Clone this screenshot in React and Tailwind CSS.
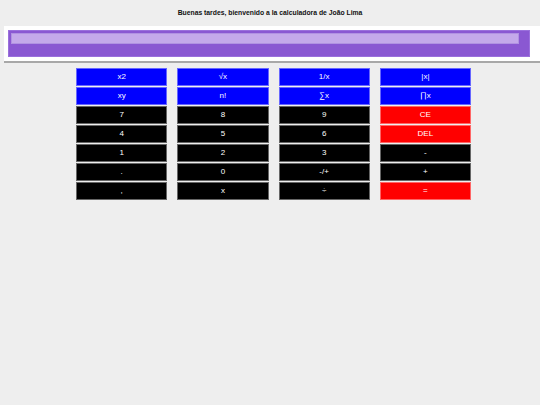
import React from "react";

const rows = [
  [
    { label: "x2", tone: "blue" },
    { label: "√x", tone: "blue" },
    { label: "1/x", tone: "blue" },
    { label: "|x|", tone: "blue" },
  ],
  [
    { label: "xy", tone: "blue" },
    { label: "n!", tone: "blue" },
    { label: "∑x", tone: "blue" },
    { label: "∏x", tone: "blue" },
  ],
  [
    { label: "7" },
    { label: "8" },
    { label: "9" },
    { label: "CE", tone: "red" },
  ],
  [
    { label: "4" },
    { label: "5" },
    { label: "6" },
    { label: "DEL", tone: "red" },
  ],
  [{ label: "1" }, { label: "2" }, { label: "3" }, { label: "-" }],
  [{ label: "." }, { label: "0" }, { label: "-/+" }, { label: "+" }],
  [{ label: "," }, { label: "x" }, { label: "÷" }, { label: "=", tone: "red" }],
];

const toneClass = {
  blue: "bg-[#0000ff]",
  red: "bg-[#ff0000]",
  black: "bg-black",
};

export default function App() {
  return (
    <div
      className="w-[540px] h-[405px] bg-[#eeeeee] overflow-hidden"
      style={{ fontFamily: '"Liberation Sans", Arial, sans-serif' }}
    >
      {/* Title */}
      <h1 className="pt-[8px] h-[26px] text-center text-[6.8px] font-bold text-[#111]">
        Buenas tardes, bienvenido a la calculadora de João Lima
      </h1>

      {/* Display */}
      <div className="ml-[4px] bg-white p-[4px] pr-[10px] shadow-[0_2px_0_#a8a8a8]">
        <div className="bg-[#8a58d2] border border-[#9a70dc] pt-[2px] pl-[2px] pr-[10px] pb-[12px]">
          <div className="h-[11px] bg-[#c4a9ea] border border-[#b192e2]" />
        </div>
      </div>

      {/* Keypad */}
      <div className="flex justify-center pl-[7px] mt-[7px]">
        <div className="grid grid-cols-4 gap-x-[10px] gap-y-[1px] w-[395px]">
          {rows.flat().map((b, i) => (
            <button
              key={i}
              className={`h-[18px] border border-white/40 text-white text-[8px] leading-none ${
                toneClass[b.tone || "black"]
              }`}
            >
              {b.label}
            </button>
          ))}
        </div>
      </div>
    </div>
  );
}
